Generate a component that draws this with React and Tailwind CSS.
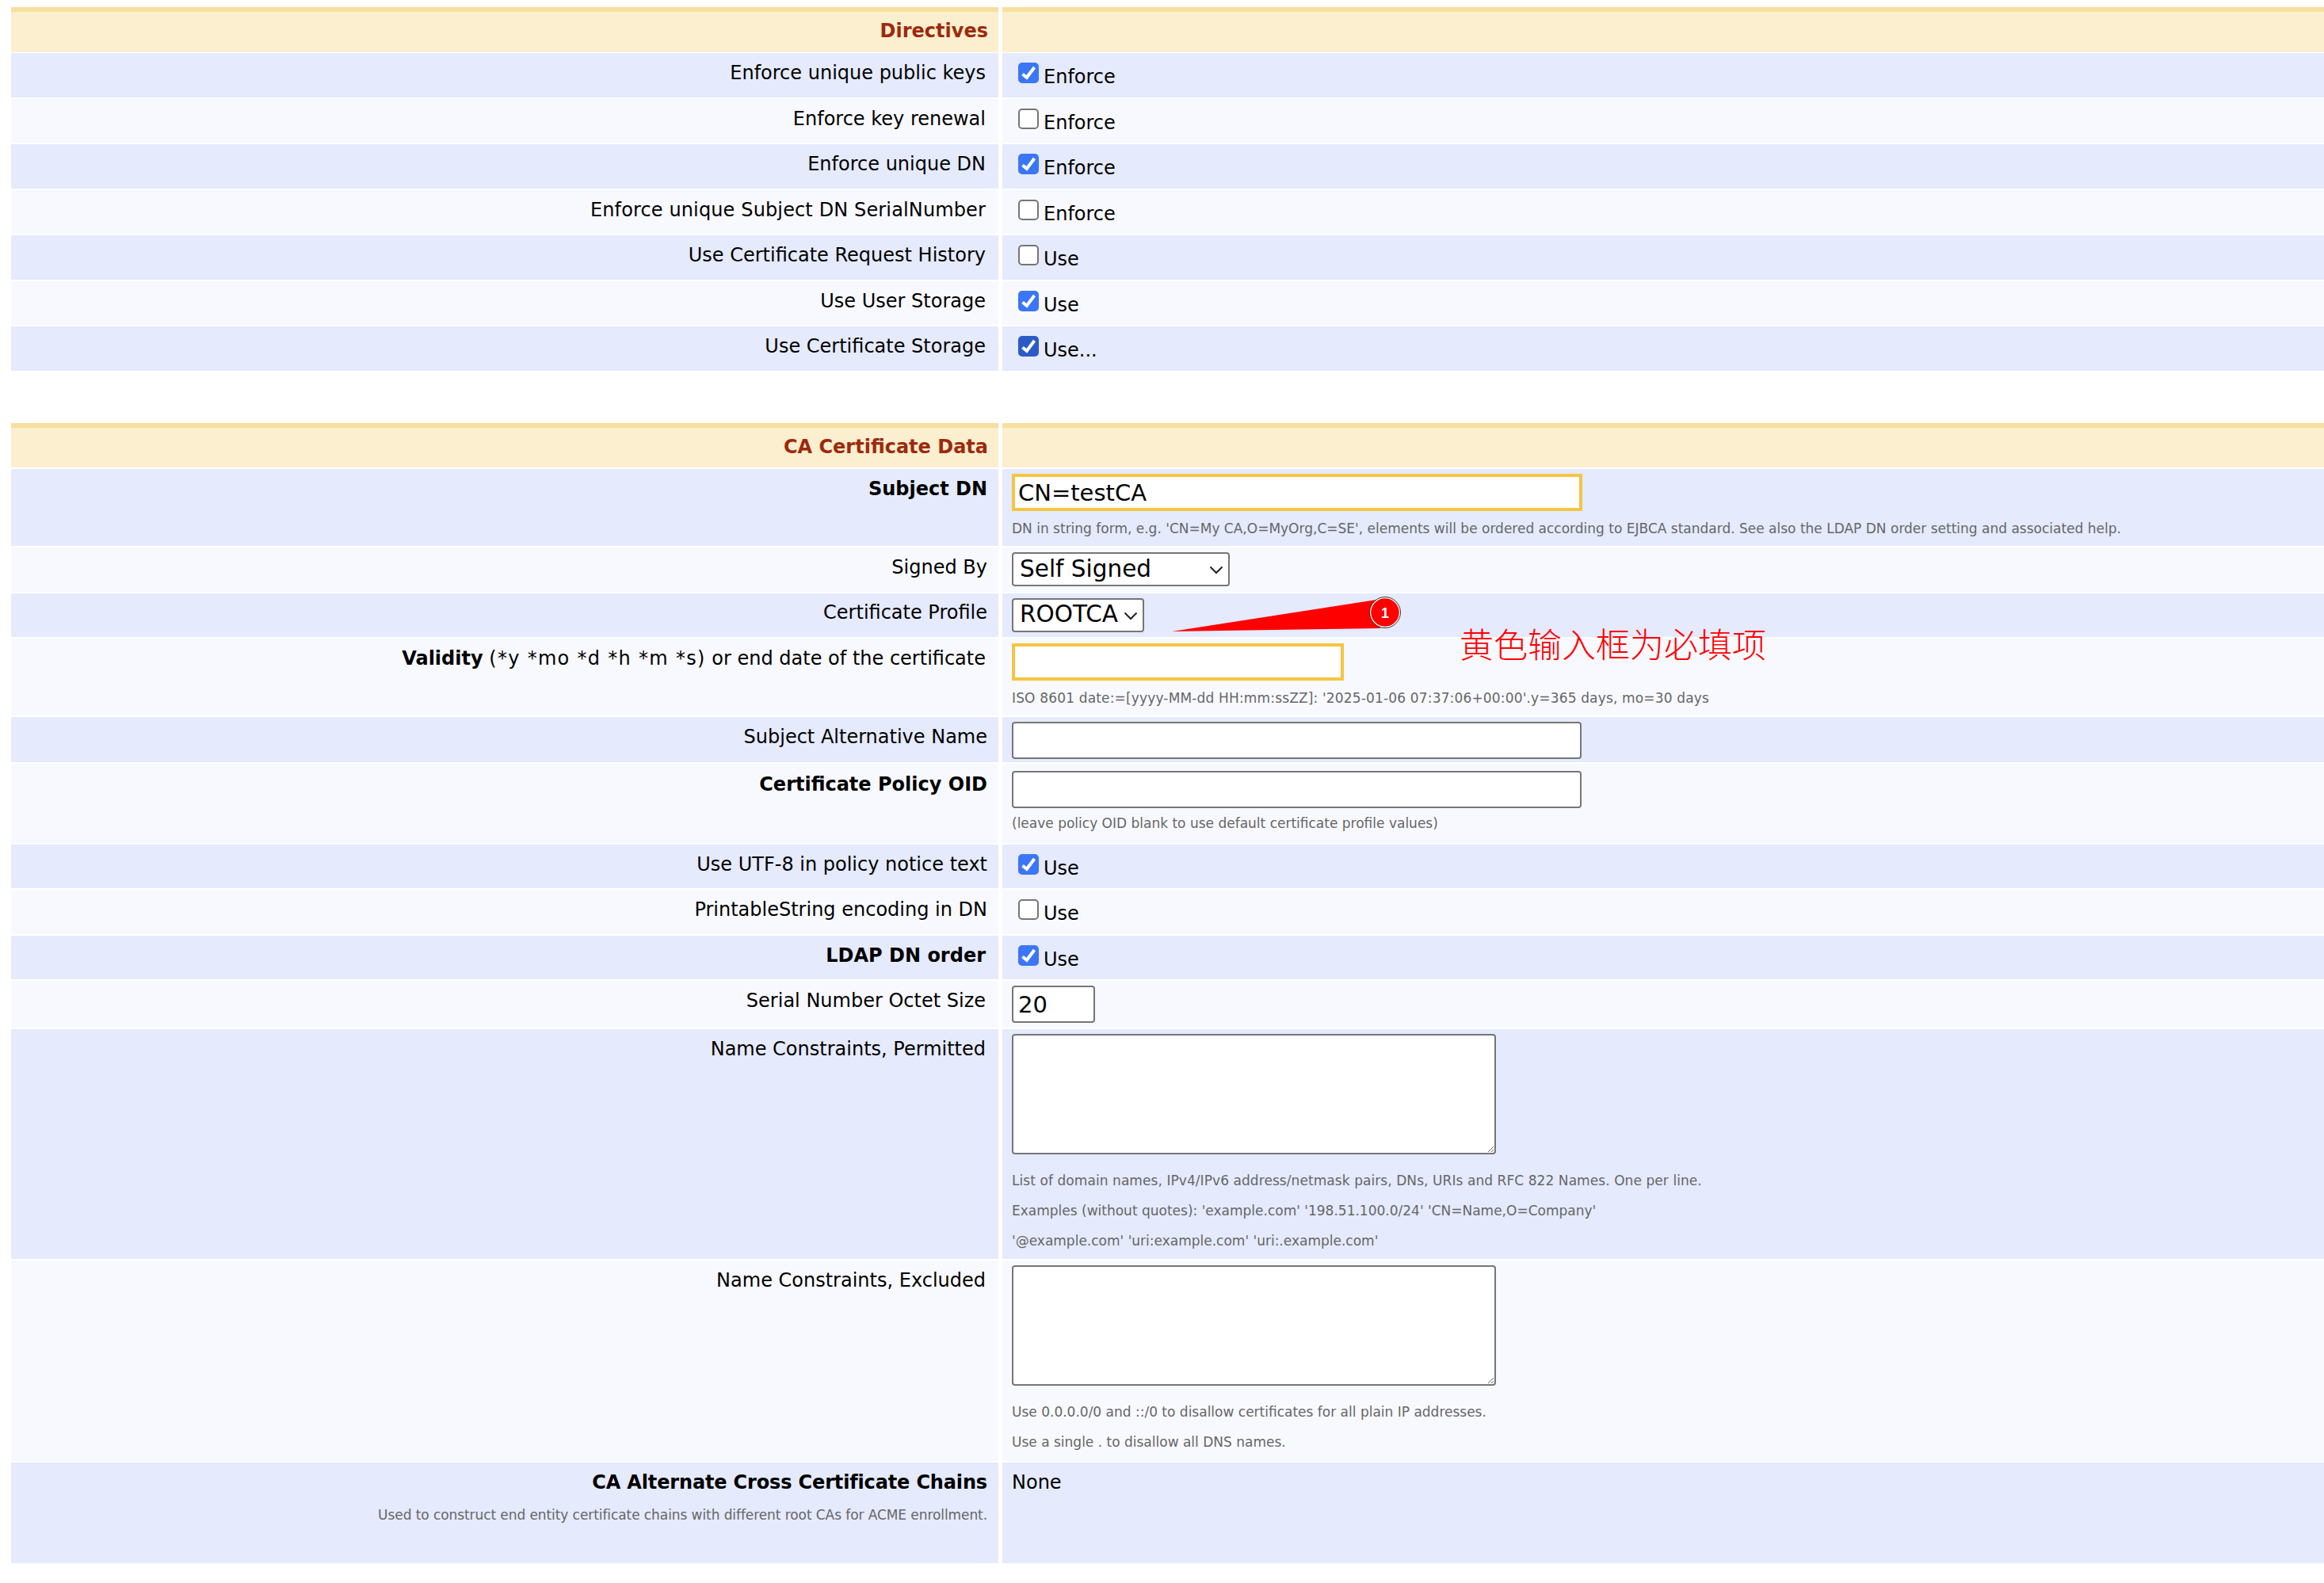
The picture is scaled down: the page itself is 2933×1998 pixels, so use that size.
import React from "react";

function Label({ bold, className = "", children }) {
  return <div className={`${bold ? "font-bold" : ""} ${className}`}>{children}</div>;
}

function Check({ checked, text, dark }) {
  return (
    <div className="flex items-start pt-[12px] pl-[20px]">
      <div className="relative w-[26px] h-[26px] shrink-0">
        <input
          type="checkbox"
          defaultChecked={checked}
          className={`block appearance-none w-[26px] h-[26px] m-0 rounded-[5px] bg-white border-[2px] border-[#767676] ${
            dark ? "checked:bg-[#2a5bc7] checked:border-[#2a5bc7]" : "checked:bg-[#3b76f6] checked:border-[#3b76f6]"
          }`}
        />
        {checked && (
          <svg className="absolute left-0 top-0 pointer-events-none" width="26" height="26" viewBox="0 0 26 26">
            <path d="M5.5 14.5 L10.8 18.8 L20.5 6" fill="none" stroke="#ffffff" strokeWidth="4" />
          </svg>
        )}
      </div>
      <span className="ml-[6px] mt-[3px] leading-[30px]">{text}</span>
    </div>
  );
}

function Help({ className = "", children }) {
  return <div className={`text-[17px] leading-[38px] text-[#666666] ${className}`}>{children}</div>;
}

function Row({ alt, h, left, right, pr = "pr-[14px]" }) {
  const bg = alt ? "bg-[#f8f9ff]" : "bg-[#e5eafd]";
  return (
    <div className={`flex gap-[5px] ${h}`}>
      <div className={`w-[1246px] shrink-0 ${bg} text-right ${pr} pt-[10px] leading-[30px]`}>{left}</div>
      <div className={`flex-1 ${bg}`}>{right}</div>
    </div>
  );
}

function Header({ title }) {
  return (
    <div className="flex gap-[5px] h-[56.5px]">
      <div className="w-[1246px] shrink-0 bg-[#fcefcf] border-t-[6px] border-[#f7dfa0] text-right pr-[13px] pt-[9px] leading-[30px] font-bold text-[#9c2a0c]">
        {title}
      </div>
      <div className="flex-1 bg-[#fcefcf] border-t-[6px] border-[#f7dfa0]" />
    </div>
  );
}

const yellow = "border-[4px] border-[#f5c542] bg-white text-[29px] px-[4px] outline-none text-black";
const grey = "border-[2px] border-[#767676] rounded-[4px] bg-white text-[29px] px-[6px] text-black";

function Pad({ className = "", children }) {
  return <div className={`pl-[12px] ${className}`}>{children}</div>;
}

function Select({ value, width }) {
  return (
    <div className={`relative ${width} h-[43px]`}>
      <select
        className="block appearance-none w-full h-full border-[2px] border-[#767676] rounded-[4px] bg-white text-[29.5px] leading-[34px] pl-[8px] pt-0 pb-[2px] text-black"
        defaultValue={value}
      >
        <option>{value}</option>
      </select>
      <svg className="absolute right-[8px] top-[17px] pointer-events-none" width="18" height="11" viewBox="0 0 18 11">
        <path d="M1.5 1.5 L9 9 L16.5 1.5" fill="none" stroke="#222222" strokeWidth="2" />
      </svg>
    </div>
  );
}

export default function App() {
  return (
    <div className="relative min-h-[1998px] bg-white pl-[14px] pt-[9px] text-[24px] text-black font-['DejaVu_Sans','Verdana',sans-serif]">
      <div className="flex flex-col gap-[1.9px]">
        <Header title="Directives" />
        <Row h="h-[55.6px]" pr="pr-[16px]" left="Enforce unique public keys" right={<Check checked text="Enforce" />} />
        <Row alt h="h-[55.6px]" pr="pr-[16px]" left="Enforce key renewal" right={<Check text="Enforce" />} />
        <Row h="h-[55.6px]" pr="pr-[16px]" left="Enforce unique DN" right={<Check checked text="Enforce" />} />
        <Row alt h="h-[55.6px]" pr="pr-[16px]" left={<span className="tracking-[0.13px]">Enforce unique Subject DN SerialNumber</span>} right={<Check text="Enforce" />} />
        <Row h="h-[55.6px]" pr="pr-[16px]" left="Use Certificate Request History" right={<Check text="Use" />} />
        <Row alt h="h-[55.6px]" pr="pr-[16px]" left="Use User Storage" right={<Check checked text="Use" />} />
        <Row h="h-[55.6px]" pr="pr-[16px]" left="Use Certificate Storage" right={<Check checked dark text="Use..." />} />
      </div>

      <div className="flex flex-col gap-[1.9px] mt-[66px]">
        <Header title="CA Certificate Data" />
        <Row
          h="h-[97px]"
          left={<Label bold>Subject DN</Label>}
          right={
            <Pad className="pt-[6px]">
              <input defaultValue="CN=testCA" className={`${yellow} w-[720px] h-[47px] block`} />
              <Help className="mt-[3px]">DN in string form, e.g. 'CN=My CA,O=MyOrg,C=SE', elements will be ordered according to EJBCA standard. See also the LDAP DN order setting and associated help.</Help>
            </Pad>
          }
        />
        <Row
          alt
          h="h-[55.6px]"
          left="Signed By"
          right={
            <Pad className="pt-[6px]">
              <Select value="Self Signed" width="w-[275px]" />
            </Pad>
          }
        />
        <Row
          h="h-[55.6px]"
          left={<Label className="-mt-[1px]">Certificate Profile</Label>}
          right={
            <Pad className="pt-[6px]">
              <Select value="ROOTCA" width="w-[167px]" />
            </Pad>
          }
        />
        <Row
          alt
          h="h-[97px]"
          pr="pr-[16px]"
          left={<span><b>Validity</b> <span className="tracking-[1.3px]">(*y *mo *d *h *m *s)</span> or end date of the certificate</span>}
          right={
            <Pad className="pt-[6px]">
              <input className={`${yellow} w-[419px] h-[47px] block`} />
              <Help className="mt-[3px] tracking-[0.16px]">ISO 8601 date:=[yyyy-MM-dd HH:mm:ssZZ]: '2025-01-06 07:37:06+00:00'.y=365 days, mo=30 days</Help>
            </Pad>
          }
        />
        <Row
          h="h-[57px]"
          left="Subject Alternative Name"
          right={
            <Pad className="pt-[6px]">
              <input className={`${grey} w-[719px] h-[47px] block`} />
            </Pad>
          }
        />
        <Row
          alt
          h="h-[100px]"
          left={<Label bold className="mt-[1px]">Certificate Policy OID</Label>}
          right={
            <Pad className="pt-[9px]">
              <input className={`${grey} w-[719px] h-[47px] block`} />
              <Help>(leave policy OID blank to use default certificate profile values)</Help>
            </Pad>
          }
        />
        <Row h="h-[55.6px]" left="Use UTF-8 in policy notice text" right={<Check checked text="Use" />} />
        <Row alt h="h-[55.6px]" left="PrintableString encoding in DN" right={<Check text="Use" />} />
        <Row h="h-[55.6px]" pr="pr-[16px]" left={<Label bold>LDAP DN order</Label>} right={<Check checked text="Use" />} />
        <Row
          alt
          h="h-[59px]"
          pr="pr-[16px]"
          left="Serial Number Octet Size"
          right={
            <Pad className="pt-[6px]">
              <input defaultValue="20" className={`${grey} w-[105px] h-[47px] block`} />
            </Pad>
          }
        />
        <Row
          h="h-[290px]"
          pr="pr-[16px]"
          left="Name Constraints, Permitted"
          right={
            <Pad className="pt-[6px]">
              <textarea className="block w-[611px] h-[152px] border-[2px] border-[#767676] rounded-[4px] bg-white mb-[14px]" />
              <Help className="tracking-[0.07px]">List of domain names, IPv4/IPv6 address/netmask pairs, DNs, URIs and RFC 822 Names. One per line.</Help>
              <Help>Examples (without quotes): 'example.com' '198.51.100.0/24' 'CN=Name,O=Company'</Help>
              <Help>'@example.com' 'uri:example.com' 'uri:.example.com'</Help>
            </Pad>
          }
        />
        <Row
          alt
          h="h-[253px]"
          pr="pr-[16px]"
          left="Name Constraints, Excluded"
          right={
            <Pad className="pt-[6px]">
              <textarea className="block w-[611px] h-[152px] border-[2px] border-[#767676] rounded-[4px] bg-white mb-[14px]" />
              <Help>Use 0.0.0.0/0 and ::/0 to disallow certificates for all plain IP addresses.</Help>
              <Help>Use a single . to disallow all DNS names.</Help>
            </Pad>
          }
        />
        <Row
          h="h-[127px]"
          left={
            <div>
              <Label bold className="tracking-[-0.15px]">CA Alternate Cross Certificate Chains</Label>
              <Help className="mt-[7px] tracking-[-0.08px]">Used to construct end entity certificate chains with different root CAs for ACME enrollment.</Help>
            </div>
          }
          right={<Pad className="pt-[10px] leading-[30px]">None</Pad>}
        />
      </div>

      <svg className="absolute left-[1470px] top-[745px]" width="300" height="60" viewBox="1470 745 300 60">
        <polygon points="1479,797 1737,757 1742,793" fill="#ff0000" />
        <circle cx="1748" cy="773" r="18.5" fill="#ff0000" stroke="#ffffff" strokeWidth="1.5" />
        <circle cx="1748" cy="773" r="19.5" fill="none" stroke="#333333" strokeWidth="1" />
      </svg>
      <div className="absolute left-[1748px] top-[774px] -translate-x-1/2 -translate-y-1/2 text-[18px] font-bold leading-none text-white font-['Liberation_Sans',sans-serif]">1</div>
      <div className="absolute left-[1842px] top-[781px] text-[43px] leading-[60px] font-light text-[#ff0000] whitespace-nowrap font-['Noto_Sans_CJK_SC',sans-serif]">黄色输入框为必填项</div>
    </div>
  );
}
